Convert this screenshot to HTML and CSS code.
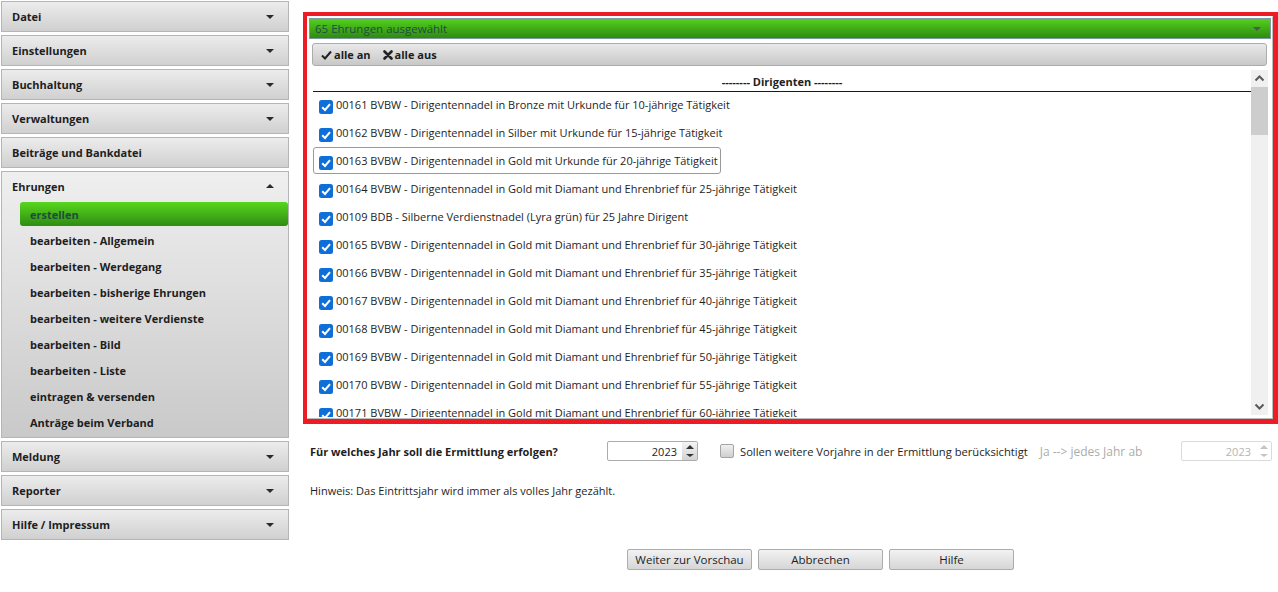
FILE: index.html
```html
<!DOCTYPE html>
<html lang="de">
<head>
  <meta charset="UTF-8" />
  <title>Ehrungen – erstellen</title>
  <link rel="stylesheet" href="styles.css">
</head>
<body>
  <nav class="sidebar">
    <div class="nav-head">Datei <span class="caret"></span></div>
    <div class="nav-head">Einstellungen <span class="caret"></span></div>
    <div class="nav-head">Buchhaltung <span class="caret"></span></div>
    <div class="nav-head">Verwaltungen <span class="caret"></span></div>
    <div class="nav-head">Beiträge und Bankdatei</div>
    <div class="nav-group">
      <div class="nav-head open">Ehrungen <span class="caret up"></span></div>
      <a class="nav-item active">erstellen</a>
      <a class="nav-item">bearbeiten - Allgemein</a>
      <a class="nav-item">bearbeiten - Werdegang</a>
      <a class="nav-item">bearbeiten - bisherige Ehrungen</a>
      <a class="nav-item">bearbeiten - weitere Verdienste</a>
      <a class="nav-item">bearbeiten - Bild</a>
      <a class="nav-item">bearbeiten - Liste</a>
      <a class="nav-item">eintragen &amp; versenden</a>
      <a class="nav-item">Anträge beim Verband</a>
    </div>
    <div class="nav-head">Meldung <span class="caret"></span></div>
    <div class="nav-head">Reporter <span class="caret"></span></div>
    <div class="nav-head">Hilfe / Impressum <span class="caret"></span></div>
  </nav>

  <main class="content">
    <div class="panel">
      <div class="panel-inner">
        <div class="select-bar">65 Ehrungen ausgewählt <span class="caret dark"></span></div>
        <div class="toolbar">
          <span class="tool">
            <svg width="11" height="10" viewBox="0 0 11 10"><path d="M1 5.5 L4 8.5 L10 1.5" fill="none" stroke="#222" stroke-width="2"/></svg>
            alle an
          </span>
          <span class="tool">
            <svg width="10" height="10" viewBox="0 0 10 10"><path d="M1.5 1.5 L8.5 8.5 M8.5 1.5 L1.5 8.5" stroke="#222" stroke-width="2.6" stroke-linecap="round"/></svg>
            alle aus
          </span>
        </div>
        <div class="list">
          <div class="list-body">
            <div class="list-title">-------- Dirigenten --------</div>
            <div id="rows"></div>
          </div>
          <div class="scrollbar">
            <div class="sb-btn">
              <svg width="11" height="7" viewBox="0 0 11 7"><path d="M1.5 5.5 L5.5 1.5 L9.5 5.5" fill="none" stroke="#5a5a5a" stroke-width="2"/></svg>
            </div>
            <div class="sb-thumb"></div>
            <div class="sb-track"></div>
            <div class="sb-btn">
              <svg width="11" height="7" viewBox="0 0 11 7"><path d="M1.5 1.5 L5.5 5.5 L9.5 1.5" fill="none" stroke="#5a5a5a" stroke-width="2"/></svg>
            </div>
          </div>
        </div>
      </div>
    </div>

    <div class="form-row">
      <label class="q-label">Für welches Jahr soll die Ermittlung erfolgen?</label>
      <div class="spinner">
        <span class="spin-value">2023</span>
        <span class="spin-btns"><i class="up"></i><i class="down"></i></span>
      </div>
      <span class="check-box"></span>
      <span class="check-text">Sollen weitere Vorjahre in der Ermittlung berücksichtigt</span>
      <span class="muted">Ja --&gt; jedes Jahr ab</span>
      <div class="spinner disabled">
        <span class="spin-value">2023</span>
        <span class="spin-btns"><i class="up"></i><i class="down"></i></span>
      </div>
    </div>

    <p class="hint">Hinweis: Das Eintrittsjahr wird immer als volles Jahr gezählt.</p>

    <div class="buttons">
      <button class="btn">Weiter zur Vorschau</button>
      <button class="btn">Abbrechen</button>
      <button class="btn">Hilfe</button>
    </div>
  </main>

  <script>
    const ehrungen = [
      "00161 BVBW - Dirigentennadel in Bronze mit Urkunde für 10-jährige Tätigkeit",
      "00162 BVBW - Dirigentennadel in Silber mit Urkunde für 15-jährige Tätigkeit",
      "00163 BVBW - Dirigentennadel in Gold mit Urkunde für 20-jährige Tätigkeit",
      "00164 BVBW - Dirigentennadel in Gold mit Diamant und Ehrenbrief für 25-jährige Tätigkeit",
      "00109 BDB - Silberne Verdienstnadel (Lyra grün) für 25 Jahre Dirigent",
      "00165 BVBW - Dirigentennadel in Gold mit Diamant und Ehrenbrief für 30-jährige Tätigkeit",
      "00166 BVBW - Dirigentennadel in Gold mit Diamant und Ehrenbrief für 35-jährige Tätigkeit",
      "00167 BVBW - Dirigentennadel in Gold mit Diamant und Ehrenbrief für 40-jährige Tätigkeit",
      "00168 BVBW - Dirigentennadel in Gold mit Diamant und Ehrenbrief für 45-jährige Tätigkeit",
      "00169 BVBW - Dirigentennadel in Gold mit Diamant und Ehrenbrief für 50-jährige Tätigkeit",
      "00170 BVBW - Dirigentennadel in Gold mit Diamant und Ehrenbrief für 55-jährige Tätigkeit",
      "00171 BVBW - Dirigentennadel in Gold mit Diamant und Ehrenbrief für 60-jährige Tätigkeit"
    ];
    const focused = 2;
    const check = '<svg class="cb" width="14" height="14" viewBox="0 0 14 14">' +
      '<rect width="14" height="14" rx="2.5" fill="#0f6fd8"/>' +
      '<path d="M3.2 7.2 L6 10 L11 4.2" fill="none" stroke="#fff" stroke-width="2"/></svg>';

    const rows = document.getElementById("rows");
    ehrungen.forEach((text, i) => {
      const row = document.createElement("div");
      row.className = "row";
      row.innerHTML = '<span class="item' + (i === focused ? ' focus' : '') + '">' + check +
        '<span>' + text + '</span></span>';
      rows.appendChild(row);
    });
  </script>
</body>
</html>
```

FILE: styles.css
```css
body {
  margin: 0;
  background: #fff;
  font-family: 'Open Sans', 'Noto Sans', sans-serif;
  font-size: 11px;
  color: #1e1e1e;
  display: flex;
  align-items: flex-start;
}

/* sidebar */
.sidebar {
  width: 288px;
  margin: 1px 0 0 1px;
  display: flex;
  flex-direction: column;
  gap: 3px;
}
.nav-head {
  height: 29px;
  border: 1px solid #b5b5b5;
  background: linear-gradient(#ececec, #d0d0d0);
  display: flex;
  align-items: center;
  justify-content: space-between;
  padding: 0 14px 0 10px;
  font-weight: bold;
  color: #1e1e1e;
}
.caret {
  width: 0;
  height: 0;
  border-left: 4px solid transparent;
  border-right: 4px solid transparent;
  border-top: 4px solid #2a2a2a;
}
.caret.up {
  border-top: 0;
  border-bottom: 4px solid #2a2a2a;
}
.caret.dark {
  border-top-color: #4a5a50;
}
.nav-group {
  border: 1px solid #b5b5b5;
  background: linear-gradient(#efefef, #c9c9c9);
  padding-bottom: 2px;
}
.nav-group .nav-head {
  border: 0;
  background: none;
  height: 28px;
  padding-bottom: 2px;
}
.nav-item {
  display: flex;
  align-items: center;
  height: 26px;
  padding-left: 28px;
  font-weight: bold;
  color: #1e1e1e;
}
.nav-item.active {
  height: 24px;
  margin: 0 0 1px 18px;
  padding-left: 10px;
  border-radius: 3px;
  background: linear-gradient(#58d61e, #2e8c12);
  color: #1f4d3b;
}

/* main panel */
.content {
  flex: 1;
  margin-left: 14px;
}
.panel {
  margin-top: 12px;
  height: 412px;
  box-sizing: border-box;
  border: 4px solid #ed1c24;
  border-right-width: 5px;
  border-bottom-width: 5px;
}
.panel-inner {
  height: 100%;
  box-sizing: border-box;
  border: 1px solid #bdbdbd;
  border-top-color: #fff;
  border-left-color: #fff;
  padding: 1px;
  display: flex;
  flex-direction: column;
}
.select-bar {
  height: 19px;
  flex: none;
  border: 1px solid #7f9aa5;
  background: linear-gradient(#52d01e, #2f8a10);
  color: #1e4d42;
  font-size: 11.5px;
  display: flex;
  align-items: center;
  justify-content: space-between;
  padding: 0 9px 0 5px;
}
.toolbar {
  height: 21px;
  flex: none;
  margin: 4px 4px 2px 3px;
  border: 1px solid #acacac;
  border-radius: 3px;
  background: linear-gradient(#e9e9e9, #c8c8c8);
  display: flex;
  align-items: center;
  gap: 12px;
  padding-left: 8px;
  font-weight: bold;
}
.tool {
  display: flex;
  align-items: center;
  gap: 2px;
}
.list {
  flex: 1;
  min-height: 0;
  margin: 0 3px 0 1px;
  display: flex;
}
.list-body {
  flex: 1;
  overflow: hidden;
  padding-left: 3px;
}
.list-title {
  height: 24px;
  box-sizing: border-box;
  padding-top: 6px;
  border-bottom: 1px solid #1a1a1a;
  text-align: center;
  font-weight: bold;
}
.row {
  height: 28px;
}
.item {
  display: inline-flex;
  align-items: center;
  height: 25px;
  border: 1px solid transparent;
  border-radius: 3px;
  padding: 0 2px 0 5px;
  gap: 3px;
  margin-top: -1px;
}
.item .cb {
  margin-top: 5px;
  flex: none;
}
.item.focus {
  border-color: #9a9a9a;
}
.scrollbar {
  width: 17px;
  margin: 2px 0;
  background: #f0f0f0;
  display: flex;
  flex-direction: column;
}
.sb-btn {
  height: 17px;
  display: flex;
  align-items: center;
  justify-content: center;
}
.sb-thumb {
  height: 48px;
  background: #cdcdcd;
}
.sb-track {
  flex: 1;
}

/* form below */
.form-row {
  display: flex;
  align-items: center;
  margin-top: 17px;
  padding: 0 6px 0 7px;
  height: 20px;
}
.q-label {
  width: 297px;
  font-weight: bold;
}
.spinner {
  width: 89px;
  height: 18px;
  border: 1px solid #acacac;
  border-radius: 2px;
  display: flex;
  align-items: center;
}
.spin-value {
  flex: 1;
  text-align: right;
  padding-right: 5px;
}
.spin-btns {
  width: 15px;
  height: 100%;
  display: flex;
  flex-direction: column;
  background: linear-gradient(#f4f4f4, #d2d2d2);
}
.spin-btns i {
  flex: 1;
  display: flex;
  align-items: center;
  justify-content: center;
}
.spin-btns i::before {
  content: "";
  border-left: 4px solid transparent;
  border-right: 4px solid transparent;
}
.spin-btns .up::before {
  border-bottom: 4px solid #333;
}
.spin-btns .down::before {
  border-top: 3px solid #333;
}
.check-box {
  width: 12px;
  height: 12px;
  margin-left: 22px;
  border: 1px solid #a5a5a5;
  border-radius: 2px;
  background: linear-gradient(#f0f0f0, #cfcfcf);
}
.check-text {
  margin-left: 6px;
  font-size: 11.2px;
}
.muted {
  margin-left: 12px;
  font-size: 12px;
  color: #acacac;
}
.spinner.disabled {
  margin-left: auto;
  border-color: #dadada;
  color: #b4b4b4;
}
.spinner.disabled .spin-btns {
  background: #fff;
}
.spinner.disabled .up::before {
  border-bottom-color: #c4c4c4;
}
.spinner.disabled .down::before {
  border-top-color: #c4c4c4;
}
.hint {
  margin: 22px 0 0 7px;
}
.buttons {
  display: flex;
  gap: 6px;
  margin: 51px 0 0 324px;
}
.btn {
  width: 125px;
  height: 21px;
  padding: 0;
  border: 1px solid #acacac;
  border-radius: 2px;
  background: linear-gradient(#f2f2f2, #d6d6d6);
  font-family: inherit;
  font-size: 11.5px;
  color: #1e1e1e;
}
```
